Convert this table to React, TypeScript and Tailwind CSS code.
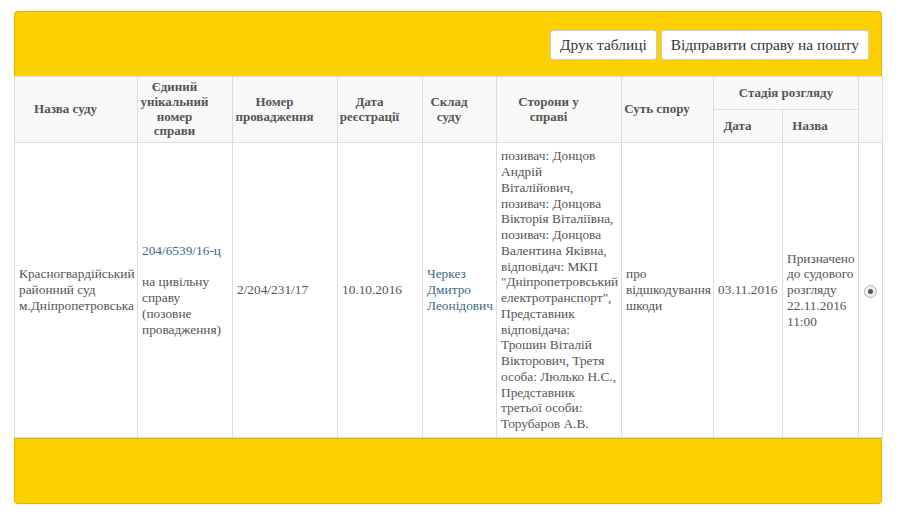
export default function App() {
  const th = "border border-[#dddddd] bg-[#f9f9f9] font-bold text-[#555] text-[13px] leading-[14.7px] text-center align-middle pl-[1px] pr-[22px] py-[1px]";
  const td = "border border-[#dddddd] text-[#555] text-[13.33px] leading-[15.75px] align-middle pl-[4px] pr-[2px] py-[4px]";
  const sides = [
    "позивач: Донцов",
    "Андрій",
    "Віталійович,",
    "позивач: Донцова",
    "Вікторія Віталіївна,",
    "позивач: Донцова",
    "Валентина Яківна,",
    "відповідач: МКП",
    "\"Дніпропетровський",
    "електротранспорт\",",
    "Представник",
    "відповідача:",
    "Трошин Віталій",
    "Вікторович, Третя",
    "особа: Люлько Н.С.,",
    "Представник",
    "третьої особи:",
    "Торубаров А.В.",
  ];
  const stage = ["Призначено", "до судового", "розгляду", "22.11.2016", "11:00"];
  return (
    <div className="w-[899px] h-[521px] bg-white pt-[11px] pl-[14px] font-['Liberation_Serif','Times_New_Roman',serif]">
      <div className="w-[868px] shadow-[0_1px_2px_rgba(0,0,0,0.08)] rounded-[4px]">
        <div className="h-[65px] bg-[#fed000] border border-[#dfb900] border-b-0 rounded-t-[4px] flex items-center justify-end gap-[4px] pr-[12px] pt-[1px]">
          <button className="h-[30px] px-[9px] bg-white border border-[#cccccc] rounded-[3px] text-[15.4px] text-[#333] font-['Liberation_Serif',serif]">Друк таблиці</button>
          <button className="h-[30px] px-[9px] bg-white border border-[#cccccc] rounded-[3px] text-[15.4px] text-[#333] font-['Liberation_Serif',serif]">Відправити справу на пошту</button>
        </div>
        <table className="w-[868px] table-fixed border-collapse font-['Liberation_Serif',serif]">
          <colgroup>
            <col className="w-[123px]" />
            <col className="w-[95px]" />
            <col className="w-[105px]" />
            <col className="w-[85px]" />
            <col className="w-[74px]" />
            <col className="w-[125px]" />
            <col className="w-[92px]" />
            <col className="w-[69px]" />
            <col className="w-[76px]" />
            <col className="w-[24px]" />
          </colgroup>
          <thead>
            <tr className="h-[33px]">
              <th rowSpan={2} className={th}>Назва суду</th>
              <th rowSpan={2} className={th}>Єдиний унікальний номер справи</th>
              <th rowSpan={2} className={th}>Номер провадження</th>
              <th rowSpan={2} className={th}>Дата реєстрації</th>
              <th rowSpan={2} className={th}>Склад суду</th>
              <th rowSpan={2} className={th}>Сторони у справі</th>
              <th rowSpan={2} className={th}>Суть спору</th>
              <th colSpan={2} className={`${th} !px-[2px]`}>Стадія розгляду</th>
              <th rowSpan={2} className={th}></th>
            </tr>
            <tr className="h-[33px]">
              <th className={th}>Дата</th>
              <th className={th}>Назва</th>
            </tr>
          </thead>
          <tbody>
            <tr className="h-[295px]">
              <td className={td}>Красногвардійський районний суд м.Дніпропетровська</td>
              <td className={td}>
                <span className="text-[#3a6a8a]">204/6539/16-ц</span>
                <br />
                <br />
                на цивільну справу (позовне провадження)
              </td>
              <td className={td}>2/204/231/17</td>
              <td className={td}>10.10.2016</td>
              <td className={td}>
                <span className="text-[#3a6a8a]">Черкез Дмитро Леонідович</span>
              </td>
              <td className={`${td} whitespace-nowrap`}>
                {sides.map((l, i) => (
                  <div key={i}>{l}</div>
                ))}
              </td>
              <td className={td}>про відшкодування шкоди</td>
              <td className={td}>03.11.2016</td>
              <td className={`${td} whitespace-nowrap`}>
                {stage.map((l, i) => (
                  <div key={i}>{l}</div>
                ))}
              </td>
              <td className={`${td} !px-0 text-center`}>
                <span className="inline-flex w-[13px] h-[13px] rounded-full border border-[#b5b5b5] bg-[#eeeeee] items-center justify-center align-middle">
                  <span className="w-[5px] h-[5px] rounded-full bg-[#555]" />
                </span>
              </td>
            </tr>
          </tbody>
        </table>
        <div className="h-[66px] bg-[#fed000] border border-[#dfb900] border-t-[#cfae3a] rounded-b-[4px]" />
      </div>
    </div>
  );
}
